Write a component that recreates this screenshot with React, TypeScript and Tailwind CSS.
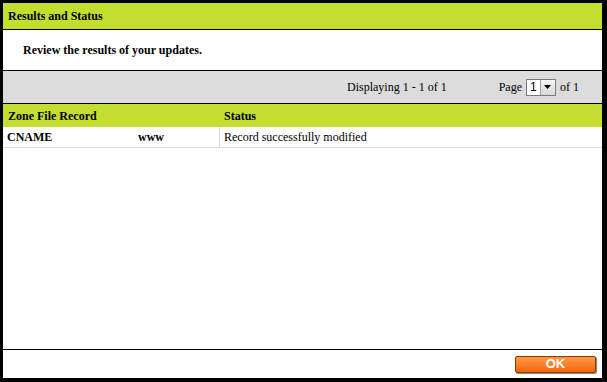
export default function App() {
  return (
    <div
      className="w-[607px] h-[382px] bg-black pt-[3px] pl-[3px] pr-[5px] pb-[4px]"
      style={{ fontFamily: '"Liberation Serif", serif' }}
    >
      <div className="flex h-full flex-col bg-white text-[12px] text-black">
        {/* Title */}
        <div className="flex h-[27px] items-center border-b border-black bg-[#c3de2e] pl-[5px] font-bold">
          Results and Status
        </div>
        <div className="flex h-[41px] items-center border-b border-black pl-[20px] font-bold">
          Review the results of your updates.
        </div>

        {/* Pager */}
        <div className="flex h-[33px] items-center border-b border-black bg-[#dcdcdc]">
          <span className="ml-[344px]">Displaying 1 - 1 of 1</span>
          <span className="ml-[52px]">Page</span>
          <div className="ml-[4px] flex h-[17px] w-[30px] items-center border border-[#7a7a7a] bg-white">
            <span className="pl-[3px] text-[12px]" style={{ fontFamily: '"Liberation Sans", sans-serif' }}>1</span>
            <span className="ml-auto flex h-[15px] w-[15px] items-center justify-center border-l border-[#a0a0a0] bg-gradient-to-b from-[#f6f6f6] to-[#d8d8d8]">
              <svg width="7" height="4" viewBox="0 0 7 4">
                <path d="M0 0h7L3.5 4z" fill="#000" />
              </svg>
            </span>
          </div>
          <span className="ml-[4px]">of 1</span>
        </div>

        {/* Table */}
        <div className="flex h-[23px] items-center bg-[#c3de2e] font-bold">
          <div className="w-[216px] pl-[5px]">Zone File Record</div>
          <div className="pl-[5px]">Status</div>
        </div>
        <div className="flex h-[21px] items-stretch border-b border-[#dadada]">
          <div className="flex w-[216px] items-center pl-[4px] font-bold">
            <span className="w-[131px]">CNAME</span>
            <span>www</span>
          </div>
          <div className="flex items-center border-l border-[#dadada] pl-[4px]">
            Record successfully modified
          </div>
        </div>

        <div className="flex-1" />

        {/* Footer */}
        <div className="flex h-[29px] items-center justify-end border-t border-black pr-[6px]">
          <button
            className="flex h-[17px] w-[81px] items-center justify-center rounded-[2px] border border-[#8a3a00] bg-gradient-to-b from-[#ff9a40] to-[#f5640a] text-[13px] font-bold text-white shadow-[1px_1px_1px_rgba(0,0,0,0.5)]"
            style={{ fontFamily: '"Liberation Sans", sans-serif' }}
          >
            OK
          </button>
        </div>
      </div>
    </div>
  )
}
